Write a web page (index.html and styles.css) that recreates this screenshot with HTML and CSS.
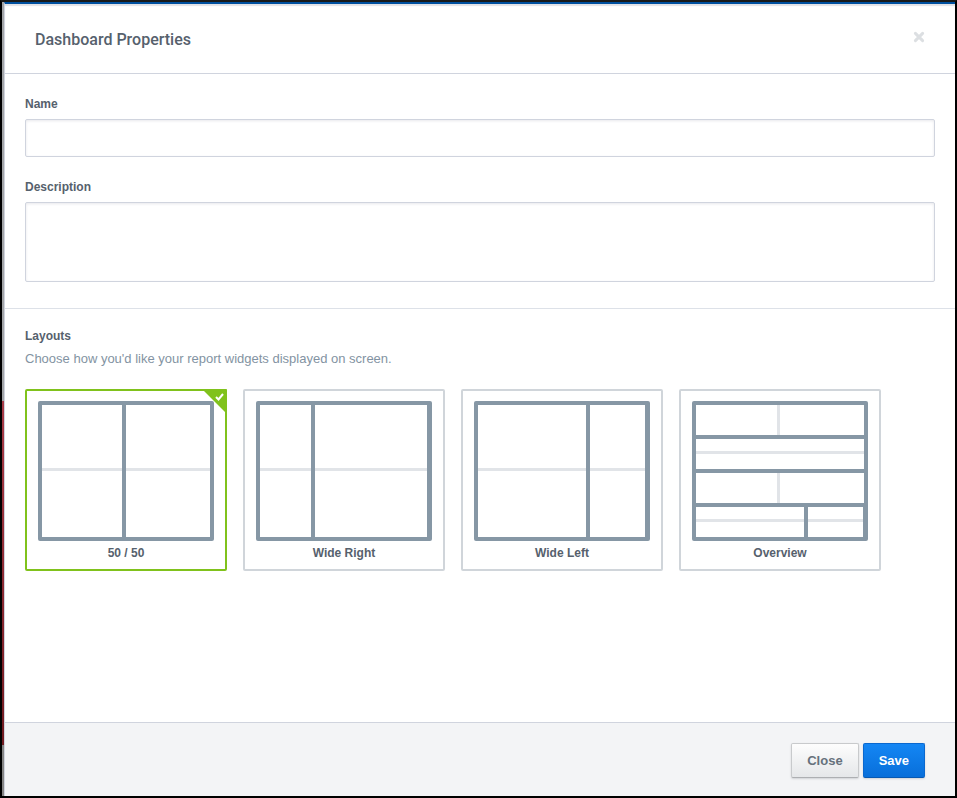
FILE: index.html
```
<!DOCTYPE html>
<html lang="en">
<head>
<meta charset="utf-8">
<title>Dashboard Properties</title>
<link rel="stylesheet" href="styles.css">
</head>
<body>
<div class="screen">
  <div class="backdrop" aria-hidden="true">
    <div class="backdrop-top"></div>
    <div class="backdrop-accent"></div>
    <div class="backdrop-bottom"></div>
  </div>
  <form class="dialog" role="dialog" aria-labelledby="dialog-title">
    <header class="dialog-header">
      <h1 class="dialog-title" id="dialog-title">Dashboard Properties</h1>
      <button class="dismiss" type="button" aria-label="Dismiss">
        <svg width="12" height="12" viewBox="0 0 12 12"><path d="M2.4 2.4 9.6 9.6M9.6 2.4 2.4 9.6" stroke="#dcdfe2" stroke-width="3" stroke-linecap="round"/></svg>
      </button>
    </header>
    <section class="fields">
      <label class="label" for="name">Name</label>
      <input class="control name" id="name" type="text">
      <label class="label" for="description">Description</label>
      <textarea class="control description" id="description"></textarea>
    </section>
    <section class="layouts">
      <h2 class="label" id="layouts-title">Layouts</h2>
      <p class="hint">Choose how you'd like your report widgets displayed on screen.</p>
      <div class="cards" role="radiogroup" aria-labelledby="layouts-title">
        <label class="card">
          <input class="radio" type="radio" name="layout" checked>
          <svg class="diagram" width="176" height="140" viewBox="0 0 176 140">
            <rect class="frame" width="176" height="140" rx="2"/>
            <path class="pane" d="M4 4h80v132H4zM88 4h84v132H88z"/>
            <path class="split" d="M4 67h80v3H4zM88 67h84v3H88z"/>
          </svg>
          <span class="caption">50 / 50</span>
          <svg class="corner" width="25" height="25" viewBox="0 0 25 25"><path d="M0 0h24q1 0 1 1v24z" fill="#80c21c"/><path d="m14 8 2.500 2.500 4.500-5.500" fill="none" stroke="#fff" stroke-width="2"/></svg>
        </label>
        <label class="card">
          <input class="radio" type="radio" name="layout">
          <svg class="diagram" width="176" height="140" viewBox="0 0 176 140">
            <rect class="frame" width="176" height="140" rx="2"/>
            <path class="pane" d="M4 4h51v132H4zM59 4h112v132H59z"/>
            <path class="split" d="M4 67h51v3H4zM59 67h112v3H59z"/>
          </svg>
          <span class="caption">Wide Right</span>
        </label>
        <label class="card">
          <input class="radio" type="radio" name="layout">
          <svg class="diagram" width="176" height="140" viewBox="0 0 176 140">
            <rect class="frame" width="176" height="140" rx="2"/>
            <path class="pane" d="M4 4h108v132H4zM116 4h55v132H116z"/>
            <path class="split" d="M4 67h108v3H4zM116 67h55v3H116z"/>
          </svg>
          <span class="caption">Wide Left</span>
        </label>
        <label class="card">
          <input class="radio" type="radio" name="layout">
          <svg class="diagram" width="176" height="140" viewBox="0 0 176 140">
            <rect class="frame" width="176" height="140" rx="2"/>
            <path class="pane" d="M4 4h168v30H4zM4 38h168v30H4zM4 72h168v30H4zM4 106h108v30H4zM116 106h55v30H116z"/>
            <path class="split" d="M85 4h3v30H85zM4 50h168v3H4zM85 72h3v30H85zM4 118h108v3H4zM116 118h55v3H116z"/>
          </svg>
          <span class="caption">Overview</span>
        </label>
      </div>
    </section>
    <footer class="dialog-footer">
      <button class="button" type="button">Close</button>
      <button class="button primary" type="submit">Save</button>
    </footer>
  </form>
</div>
</body>
</html>
```
FILE: styles.css
```
* {
  box-sizing: border-box;
}

body {
  margin: 0;
  font-family: "Liberation Sans", Arial, sans-serif;
  font-size: 13px;
  color: #56616d;
}

.screen {
  display: flex;
  min-height: 100vh;
  border: 2px solid #000;
  border-top-color: #1a1a1a;
}

.backdrop {
  display: flex;
  flex-direction: column;
  width: 2px;
}

.backdrop-top {
  flex: 399;
  background: #a3a5a8;
}

.backdrop-accent {
  flex: 344;
  background: linear-gradient(#a83c48, #701a20);
}

.backdrop-bottom {
  flex: 51;
  background: #858585;
}

.dialog {
  flex: 1;
  display: flex;
  flex-direction: column;
  border-top: 2px solid #00509f;
  border-left: 1px solid #d0d4de;
  background: #fff;
}

.dialog-header {
  display: flex;
  justify-content: space-between;
  align-items: center;
  height: 70px;
  padding: 2px 30px 0;
  border-bottom: 1px solid #d0d4de;
  box-shadow: inset 0 2px 1px #e2e2e6;
}

.dialog-title {
  margin: 0;
  font-family: Roboto, sans-serif;
  font-size: 16px;
  font-weight: 500;
  line-height: 24px;
}

.dismiss {
  display: flex;
  padding: 0;
  margin-bottom: 6px;
  border: 0;
  background: none;
}

.fields {
  display: flex;
  flex-direction: column;
  padding: 20px 20px 26px;
  border-bottom: 1px solid #dde1e8;
}

.label {
  margin: 0;
  font-size: 12px;
  font-weight: bold;
  line-height: 20px;
}

.control {
  width: 100%;
  border: 1px solid #d0d4de;
  border-radius: 2px;
  padding: 8px;
  font: inherit;
  color: inherit;
  background: #fff;
  box-shadow: inset 0 1px 3px #e8e8ec;
  resize: none;
}

.name {
  height: 38px;
  margin: 5px 0 20px;
}

.description {
  height: 80px;
  margin-top: 5px;
}

.layouts {
  flex: 1;
  padding: 17px 20px;
}

.hint {
  margin: 3px 0 20px;
  line-height: 20px;
  color: #8393a2;
}

.cards {
  display: flex;
  flex-wrap: wrap;
  gap: 16px;
}

.card {
  position: relative;
  display: flex;
  flex-direction: column;
  align-items: center;
  height: 182px;
  padding: 10px 11px;
  border: 2px solid #d0d5da;
  border-radius: 2px;
}

.card:has(:checked) {
  border-color: #80c21c;
}

.radio {
  position: absolute;
  margin: 0;
  opacity: 0;
}

.diagram {
  flex: none;
}

.frame {
  fill: #8697a5;
}

.pane {
  fill: #fff;
}

.split {
  fill: #e1e4e8;
}

.caption {
  font-size: 12px;
  font-weight: bold;
  line-height: 24px;
}

.corner {
  position: absolute;
  top: -2px;
  right: -2px;
}

.dialog-footer {
  display: flex;
  justify-content: flex-end;
  align-items: center;
  gap: 4px;
  height: 74px;
  padding: 2px 30px 0;
  border-top: 1px solid #d0d4de;
  background: #f3f4f6;
}

.button {
  height: 35px;
  padding: 0 15px;
  border: 1px solid #c8cacc;
  border-bottom-color: #adafb2;
  border-radius: 2px;
  font-family: inherit;
  font-size: 13px;
  font-weight: bold;
  color: #66717c;
  background: linear-gradient(#fdfdfd, #e5e7e9);
  box-shadow: 0 1px 2px #d0d2d5;
}

.primary {
  border-color: #0a68cf;
  border-bottom-color: #0759b3;
  color: #fff;
  background: linear-gradient(#1486f4, #086fda);
}
```
